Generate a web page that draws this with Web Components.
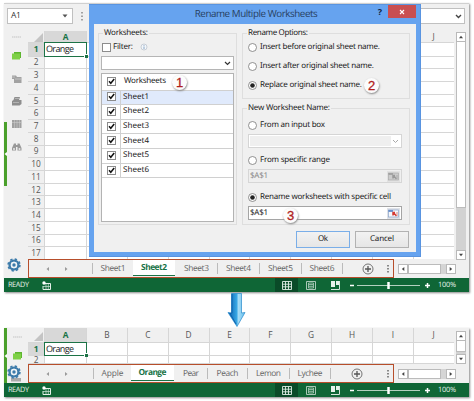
<!DOCTYPE html>
<html lang="en">
<head>
<meta charset="utf-8">
<title>Rename Multiple Worksheets</title>
<style>
body{margin:0;width:474px;height:401px;overflow:hidden;background:#fff;font-family:"Open Sans","Noto Sans",sans-serif;font-size:8.5px;color:#444;display:flex;flex-direction:column;padding:3px 0 0 4px;box-sizing:border-box}
step-arrow{margin:1px 0 0 223px}
rename-dialog{position:absolute;left:89px;top:4px}
</style>
</head>
<body>
<excel-window kind="full"></excel-window>
<step-arrow></step-arrow>
<excel-window kind="short"></excel-window>
<rename-dialog></rename-dialog>
<script>
const define=(name,render,after)=>customElements.define(name,class extends HTMLElement{
  connectedCallback(){
    if(this.shadowRoot)return;
    this.attachShadow({mode:'open'}).innerHTML=render(this);
    if(after)after(this);
  }
});

/* One-line label; letter spacing is adjusted until it fills its "w" attribute. */
define('fit-label',()=>`<style>:host{display:inline-block;white-space:nowrap;flex:none;line-height:12px;text-rendering:geometricPrecision}span{display:inline-block}</style><span><slot></slot></span>`,el=>{
  const w=+el.getAttribute('w'),s=el.shadowRoot.querySelector('span');
  if(!w)return;
  el.style.width=w+'px';
  const n=el.textContent.length;
  s.style.letterSpacing=((w-s.getBoundingClientRect().width)/Math.max(1,n-1))+'px';
});

define('step-arrow',()=>`<style>:host{display:block;width:20px;height:35px;flex:none}svg{display:block}</style>
<svg width="20" height="34"><defs><linearGradient id="g"><stop offset=".15" stop-color="#1672bd"/><stop offset=".5" stop-color="#36a5e3"/><stop offset=".62" stop-color="#a7dcf6"/><stop offset="1" stop-color="#62bdec"/></linearGradient></defs>
<path d="M4.500 .5H14.500V20L18 19.500 10 33.500 1 19.500 4.500 20Z" fill="url(#g)" stroke="#2789cb" stroke-width=".7"/><path d="M5 1V20L3 20.500 9 31" fill="none" stroke="#1063ad" stroke-width="1"/></svg>`);

define('number-badge',()=>`<style>:host{display:flex;align-items:center;justify-content:center;width:15px;height:15px;border-radius:50%;background:#fcfcfc;box-shadow:.5px 1px 2px #888;color:#b0201c;font:13px/15px "Liberation Sans",sans-serif;-webkit-text-stroke:.3px #b0201c}</style><slot></slot>`);

define('check-box',el=>`<style>:host{display:block;box-sizing:border-box;width:9px;height:9px;border:1px solid #8c8c8c;background:#fff;flex:none}svg{display:block}</style>
${el.hasAttribute('checked')?'<svg width="7" height="7"><path d="M1 3.200 2.800 5.300 6.200 1" fill="none" stroke="#111" stroke-width="1.500"/></svg>':''}`);

define('radio-row',el=>`<style>:host{display:flex;align-items:center;gap:3px;height:12px;color:#222}svg{flex:none}</style>
<svg width="9" height="9"><circle cx="4.500" cy="4.500" r="4" fill="#fff" stroke="#777" stroke-width=".8"/>${el.hasAttribute('checked')?'<circle cx="4.500" cy="4.500" r="2.300" fill="#222"/>':''}</svg><fit-label w="${el.getAttribute('w')}">${el.getAttribute('label')}</fit-label>`);

define('group-box',el=>`<style>:host{display:block;box-sizing:border-box;border:1px solid #dedede;position:relative}
fit-label{position:absolute;top:-7px;left:4px;background:#f0f0f0;padding:0 1px;color:#222}</style>
<fit-label w="${el.getAttribute('w')}">${el.getAttribute('label')}</fit-label><slot></slot>`);

define('range-field',el=>{const off=el.hasAttribute('disabled');return `<style>:host{display:flex;align-items:center;justify-content:space-between;box-sizing:border-box;height:14px;border:1px solid ${off?'#d6d6d6':'#a5a5a5'};background:${off?'#efefef':'#fff'};color:${off?'#888':'#222'};padding:0 1px}svg{display:block}</style>
<fit-label w="18">$A$1</fit-label><svg width="13" height="11"><rect width="13" height="11" fill="${off?'#e2e2e2':'#dfe2e8'}"/><rect x="1.500" y="2" width="10" height="7" fill="${off?'#ccc':'#f5f8fd'}" stroke="${off?'#aaa':'#8aa3c8'}" stroke-width=".7"/><path d="M1.500 3H6" stroke="${off?'#999':'#4a78c0'}" stroke-width="1.500"/><path d="M5.500 4.500H8M6 4V7.500M6.500 4.800 9.500 8" fill="none" stroke="${off?'#999':'#d33a33'}" stroke-width="1.500"/><path d="M10 4V8" stroke="${off?'#aaa':'#e08a80'}"/></svg>`});

define('rename-dialog',()=>`<style>
:host{display:flex;flex-direction:column;box-sizing:border-box;width:332px;height:253px;background:#66a3ef;border:solid #5994e0;border-width:1px 1px 1px 0;font:8px/12px "Noto Sans",sans-serif;color:#222}
header{height:19px;display:flex;align-items:flex-start;justify-content:flex-end;flex:none;padding-right:4px;color:#263e60}
header>fit-label.t{font:9.800px/18px "Open Sans",sans-serif;margin-right:60px}
.q{font-weight:700;font-size:9px;line-height:13px;margin-right:6px;color:#10233e}
.x{width:28px;height:13px;background:#c94f51;display:flex;align-items:center;justify-content:center}
main{margin:0 4px 0 5px;height:228px;background:#f0f0f0;display:grid;grid-template-columns:139px 168px;column-gap:5px;padding:9px 6px 0 4px;box-sizing:border-box;align-content:start}
.left{height:192px}
.filter{display:flex;align-items:center;margin:7px 0 0 3px;height:12px;gap:2px}
.filter svg{margin-left:5px}
.combo{margin:3px 0 0 2px;width:133px;height:14px;box-sizing:border-box;border:1px solid #b5b5b5;background:#fff;display:flex;align-items:center;justify-content:flex-end;padding-right:2px}
.list{margin:3px 0 0 2px;width:133px;height:149px;box-sizing:border-box;border:1px solid #b3b3b3;background:#fff}
.r{display:flex;align-items:center;height:14.67px;box-sizing:border-box;border-bottom:1px solid #d0d0d0;padding-left:5px}
.r i{align-self:stretch;border-left:1px solid #d0d0d0;margin-left:4px;width:2px}
.r.h{height:16.500px}.h fit-label{margin-left:8px}.s{background:#e0eafc}
.r check-box,.r fit-label{position:relative;top:-.5px}
.right{display:flex;flex-direction:column;gap:9px}
.g1{height:66px;padding:7px 0 0 5px}.g1 radio-row+radio-row{margin-top:7px}
.g2{height:117px;padding:10px 7px 0 5px}
.dis{height:14px;box-sizing:border-box;border:1px solid #d5d5d5;background:#fff;margin:3px 0 6px;display:flex;justify-content:space-between;align-items:center;padding:0 2px 0 1px}
.dis b{width:141px;height:10px;background:#efefef}
.g2 range-field{margin-top:3px}
.g2 range-field[disabled]{margin-bottom:8px}
footer{grid-column:1/3;display:flex;justify-content:flex-end;gap:5px;padding:6px 1px 0 0}
button{all:unset;box-sizing:border-box;width:54px;height:17px;background:linear-gradient(#f2f2f2,#e6e6e6);border:1px solid #b2b2b2;display:flex;align-items:center;justify-content:center}
button fit-label{position:relative;top:-1px}
button.p{border-color:#7aaee8}
number-badge{position:absolute}
</style>
<header><fit-label class="t" w="123">Rename Multiple Worksheets</fit-label><span class="q">?</span><span class="x"><svg width="6" height="6"><path d="M1 1 5 5M5 1 1 5" stroke="#fff" stroke-width="1.100"/></svg></span></header>
<main>
<group-box class="left" label="Worksheets:" w="44">
<div class="filter"><check-box></check-box><fit-label w="20">Filter:</fit-label><svg width="8" height="8"><circle cx="4" cy="4" r="3" fill="#f4f7fa" stroke="#b4bdc8" stroke-width=".7"/><path d="M4 2V2.800M4 3.500V6" stroke="#7c9bc0" stroke-width=".9"/></svg></div>
<div class="combo"><svg width="7" height="5"><path d="M1 1 3.500 3.500 6 1" fill="none" stroke="#333" stroke-width="1.200"/></svg></div>
<div class="list"><div class="r h"><check-box checked></check-box><fit-label w="42">Worksheets</fit-label></div>
${[1,2,3,4,5,6].map(n=>`<div class="r ${n==1?'s':''}"><check-box checked></check-box><i></i><fit-label w="26">Sheet${n}</fit-label></div>`).join('')}</div>
</group-box>
<div class="right">
<group-box class="g1" label="Rename Options:" w="60"><radio-row w="120" label="Insert before original sheet name."></radio-row><radio-row w="114" label="Insert after original sheet name."></radio-row><radio-row checked w="102" label="Replace original sheet name."></radio-row></group-box>
<group-box class="g2" label="New Worksheet Name:" w="82"><radio-row w="65" label="From an input box"></radio-row><div class="dis"><b></b><svg width="7" height="5"><path d="M1 1 3.500 3.500 6 1" fill="none" stroke="#aaa"/></svg></div>
<radio-row w="70" label="From specific range"></radio-row><range-field disabled></range-field>
<radio-row checked w="131" label="Rename worksheets with specific cell"></radio-row><range-field></range-field></group-box>
</div>
<footer><button class="p"><fit-label w="10">Ok</fit-label></button><button><fit-label w="24">Cancel</fit-label></button></footer>
</main>
<number-badge style="left:83px;top:70px">1</number-badge><number-badge style="left:275px;top:73px">2</number-badge><number-badge style="left:194px;top:203px">3</number-badge>`);

const railIcons={
 dots:'<path d="M1 5H10" stroke="#c4c4c4" stroke-width="1.200" stroke-dasharray="1.500 .5"/>',
 cards:'<path d="M3 1H10V7H3Z" fill="#5db52f"/><path d="M1 2.500H9V8.500H1Z" fill="#7ed046"/>',
 book:'<path d="M1 1.500H5L6 3H10.500V9H3V5H1Z" fill="#a2a2a2"/><path d="M1 3H4M4 5H10" stroke="#d8d8d8" stroke-width=".6"/>',
 printer:'<path d="M3.500 1H9L8 4H10.500V8L8.500 9.500H1V5L2.500 4Z" fill="#8e8e8e"/><path d="M4 2.500H8M2 6.500H8" stroke="#ccc" stroke-width=".6"/>',
 columns:'<path d="M1 1H10.500V9H1Z" fill="#a0a0a0"/><path d="M3.500 1V9M6 1V9M8.500 1V9M1 3.500H10" stroke="#d0d0d0" stroke-width=".5"/>',
 find:'<path d="M3 1.500H5V8.500H1V6ZM6.500 1.500H8.500L10.500 6V8.500H6.500Z" fill="#999"/><path d="M4.500 4H7" stroke="#999" stroke-width="2"/><circle cx="3" cy="7" r="1" fill="#e8e8e8"/><circle cx="8.500" cy="7" r="1" fill="#e8e8e8"/>'};
define('rail-icon',el=>`<style>:host,svg{display:block}</style><svg width="12" height="10">${railIcons[el.getAttribute('name')]}</svg>`);

define('tool-rail',el=>{const s=el.hasAttribute('short');return `<style>
:host{display:block;position:relative;background:#f0f0f0;width:24px;overflow:hidden}
.edge{position:absolute;left:0;width:3px;background:#4ba02c;${s?'top:0;height:55px':'top:91px;height:64px'}}
.edge svg{display:block;position:absolute;left:0;top:${s?25:29}px}
.icons{display:flex;flex-direction:column;margin:${s?'4px 0 0 8px':'1px 0 0 7px'};gap:${s?'9px':'0'}}
${s?'':'rail-icon+rail-icon{margin-top:12.5px}rail-icon:nth-child(2){margin-top:9px!important}rail-icon:nth-child(6){margin-top:13px}'}
.gear{position:absolute;left:2px;bottom:${s?0:5}px}
</style>
<div class="edge"><svg width="3" height="6"><path d="M3 1V5L.5 3Z" fill="#fff"/></svg></div>
<div class="icons">${(s?['dots','cards']:['dots','cards','book','printer','columns','find']).map(n=>`<rail-icon name="${n}"></rail-icon>`).join('')}</div>
<svg class="gear" width="16" height="${s?19:16}">${s?'<rect x="5" y="14" width="10" height="3.500" fill="#aaa"/>':''}<g fill="none" stroke="#3d7baa"><circle cx="8" cy="8" r="5.900" stroke-width="1.600" stroke-dasharray="2.320 2.320"/><circle cx="8" cy="8" r="4.400" stroke-width="2.400"/></g><circle cx="8" cy="8" r="3.200" fill="#eef3f6"/><circle cx="8" cy="8" r="1.700" fill="#3d7baa"/></svg>`});

define('sheet-grid',el=>{const rows=+el.getAttribute('rows'),s=rows<5;const cols='ABCDEFGHIJ'.split('');return `<style>
:host{display:block;overflow:hidden;background:#fff;font-size:8.3px;color:#555}
.g{display:grid;grid-template-columns:17px 42px repeat(9,40.85px);grid-template-rows:${s?'15px 13px':'12px 13.5px'};grid-auto-rows:${s?8:12.72}px}
.g>*{box-sizing:border-box;border-right:1px solid #d6d6d6;border-bottom:1px solid #d6d6d6;display:flex;align-items:center;justify-content:center;line-height:10px}
.h{background:#f0f0f0}.a{background:#d8d8d8;color:#177245;font-weight:700}
.corner svg{display:block;margin:2px 0 0 4px}
.g>.cell{justify-content:flex-start;border:1.500px solid #1c7346;padding-left:1px;color:#222;position:relative;font-size:9px;margin:-1px 0 0 -1px}
.cell i{position:absolute;right:-2px;bottom:-2px;width:3px;height:3px;background:#1c7346;border:solid #fff;border-width:1px 0 0 1px}
</style><div class="g"><div class="h corner"><svg width="9" height="9"><path d="M9 0V9H0Z" fill="#c4c4c4"/></svg></div>
${cols.map((c,i)=>`<div class="h ${i?'':'a'}">${s||!i||i==9?c:''}</div>`).join('')}
${Array.from({length:rows},(_,r)=>`<div class="h ${r?'':'a'}">${r+1}</div>`+cols.map((c,i)=>!r&&!i?'<div class="cell"><fit-label w="28">Orange</fit-label><i></i></div>':'<div></div>').join('')).join('')}</div>`});

define('arrow-button',el=>`<style>:host{display:block;box-sizing:border-box;width:10px;height:10px;border:1px solid #b9b9b9;background:#fff;flex:none}svg{display:block;transform:rotate(${el.getAttribute('turn')}deg)}</style><svg width="8" height="8"><path d="M2 5.300H6L4 2.800Z" fill="#444"/></svg>`);

define('v-scroll',el=>`<style>:host{display:flex;flex-direction:column;width:10px;background:#d2d2d2}div{box-sizing:border-box;border:1px solid #bcbcbc;border-top:0;background:#fff;height:${el.getAttribute('thumb')}px}arrow-button:last-child{margin-top:auto}</style><arrow-button turn="0"></arrow-button><div></div><arrow-button turn="180"></arrow-button>`);

define('sheet-tabs',el=>{const t=JSON.parse(el.getAttribute('tabs'));return `<style>
:host{display:flex;align-items:center;background:#f0f0f0}
.box{display:flex;box-sizing:border-box;width:366px;height:100%;border:1.500px solid #b74e2b;align-items:center;font-size:8.4px;color:#666;flex:none}
.nav{width:${el.getAttribute('nav')}px;flex:none;box-sizing:border-box;padding-left:16px;display:flex;gap:12px}
.tab{box-sizing:border-box;height:11px;border-left:1px solid #bbb;display:flex;align-items:center;justify-content:center;flex:none}
.on{height:16px;background:#fff;border-left:0;border-bottom:1.500px solid #1c7346;color:#177245;font-weight:700;align-self:flex-start}
.tab.after{border-color:transparent}
.end{height:11px;border-left:1px solid #bbb}
.plus{margin-left:${el.getAttribute('gap')}px}
.dots{margin-left:auto;margin-right:4px}
.hs{display:flex;margin-left:4px;width:58px;background:#d5d5d5}.hs div{box-sizing:border-box;width:33px;border:1px solid #bbb;background:#fff}.hs :last-child{margin-left:auto}
</style><div class="box"><div class="nav"><svg width="6" height="6"><path d="M4 1V5L1.500 3Z" fill="#999"/></svg><svg width="6" height="6"><path d="M2 1V5L4.500 3Z" fill="#999"/></svg></div>
${t.map((x,i)=>`<div class="tab ${i==1?'on':i==2?'after':''}" style="width:${x[1]}px"><fit-label w="${x[2]}">${x[0]}</fit-label></div>`).join('')}<div class="end"></div>
<svg class="plus" width="12" height="12"><circle cx="6" cy="6" r="5" fill="none" stroke="#666" stroke-width=".9"/><path d="M3 6H9M6 3V9" stroke="#555" stroke-width="1.300"/></svg>
<svg class="dots" width="2" height="10"><path d="M1 1V9" stroke="#666" stroke-width="1.500" stroke-dasharray="1.500 1.500"/></svg></div>
<div class="hs"><arrow-button turn="-90"></arrow-button><div></div><arrow-button turn="90"></arrow-button></div>`});

define('status-bar',()=>`<style>
:host{display:flex;align-items:center;background:#0f6636;color:#e9f3ec;font-size:7.3px}
svg{display:block;flex:none}.r{margin-left:4px}.m{margin-left:13px}
.v{width:23px;height:100%;background:#0a4b28;display:flex;align-items:center;justify-content:center;margin-left:224px}
</style><fit-label class="r" w="21">READY</fit-label><svg class="m" width="9" height="9"><path d="M2 2.500H8.500V8.500H1V5" fill="none" stroke="#e4f0e8"/><path d="M1 5.500H8M4 3V8M6.300 3V8" stroke="#d0e4d8" stroke-width=".7"/><circle cx="2" cy="2" r="1.700" fill="#fff"/></svg>
<div class="v"><svg width="10" height="9"><path d="M.5.5H9.500V8.500H.5ZM.5 3.200H9.500M.5 5.800H9.500M3.500.5V8.500M6.500.5V8.500" fill="none" stroke="#e0eee5" stroke-width=".9"/></svg></div>
<svg style="margin-left:8px" width="10" height="9"><path d="M.5.5H9.500V8.500H.5Z" fill="none" stroke="#b9d3c4" stroke-width=".9"/><path d="M2.500 2H7.500V7H2.500ZM3 3.600H7M3 5.300H7" fill="none" stroke="#b9d3c4" stroke-width=".8"/></svg>
<svg style="margin-left:15px" width="9" height="9"><path d="M0 0H4V6H0ZM5 0H9V4H5Z" fill="#e8f2ec"/><path d="M0 8.500H8.500V0" fill="none" stroke="#d5e6dc"/></svg>
<svg style="margin-left:9px" width="82" height="11"><path d="M1 5.500H5M76 5.500H81M78.500 3V8" stroke="#fff" stroke-width="1.500"/><path d="M8 5.500H71" stroke="#b4d0bf"/><path d="M39.500 2V9" stroke="#fff" stroke-width="2.500"/></svg>
<fit-label style="margin-left:7px" w="18">100%</fit-label>`);

define('excel-window',el=>{const full=el.getAttribute('kind')=='full';
const tabs=full?[["Sheet1",41,25],["Sheet2",42,26],["Sheet3",42,25],["Sheet4",42,25],["Sheet5",42,25],["Sheet6",41,25]]:[["Apple",38,22],["Orange",43,28],["Pear",33,16],["Peach",40,22],["Lemon",42,25],["Lychee",41,25]];
return `<style>
:host{display:block;box-sizing:border-box;width:465px;flex:none;background:#f0f0f0;box-shadow:1px 1px 2px #888}
.bar{height:28px;display:flex;align-items:flex-start;box-sizing:border-box;padding:4px 4px 0 3px;border-top:1px solid #d0d0d0}
.name{width:66px;height:16px;box-sizing:border-box;border:1px solid #c0c0c0;background:#fff;display:flex;align-items:center;justify-content:space-between;padding:0 4px 0 3px;color:#333}
.fx{flex:1;height:16px;box-sizing:border-box;border:1px solid #c0c0c0;background:#fff;margin-left:14px;display:flex;align-items:center;justify-content:flex-end;padding-right:2px}
tool-rail{height:${full?247:55}px}
.mid{display:grid;grid-template-columns:426px 10px;column-gap:2px;height:${full?228:36}px}
.main{display:flex}
sheet-grid{width:426px}
sheet-tabs{height:19px}
v-scroll{margin:${full?'1px 0 -1px':'3px 0 0'}}
status-bar{height:14px}
</style>
${full?`<div class="bar"><div class="name"><fit-label w="10">A1</fit-label><svg width="6" height="4"><path d="M.5.5H5.500L3 3.500Z" fill="#555"/></svg></div><svg style="margin:4px 0 0 8px" width="2" height="9"><path d="M1 0V9" stroke="#888" stroke-width="1.500" stroke-dasharray="1.500 2"/></svg><div class="fx"><svg width="7" height="5"><path d="M1 1 3.500 3.500 6 1" fill="none" stroke="#444" stroke-width="1.400"/></svg></div></div>`:''}
<div class="main"><tool-rail ${full?'':'short'}></tool-rail><div><div class="mid"><sheet-grid rows="${full?17:2}"></sheet-grid><v-scroll thumb="${full?166:11}"></v-scroll></div>
<sheet-tabs nav="${full?63:64}" gap="${full?19:20}" tabs='${JSON.stringify(tabs)}'></sheet-tabs></div></div>
<status-bar></status-bar>`});
</script>
</body>
</html>
